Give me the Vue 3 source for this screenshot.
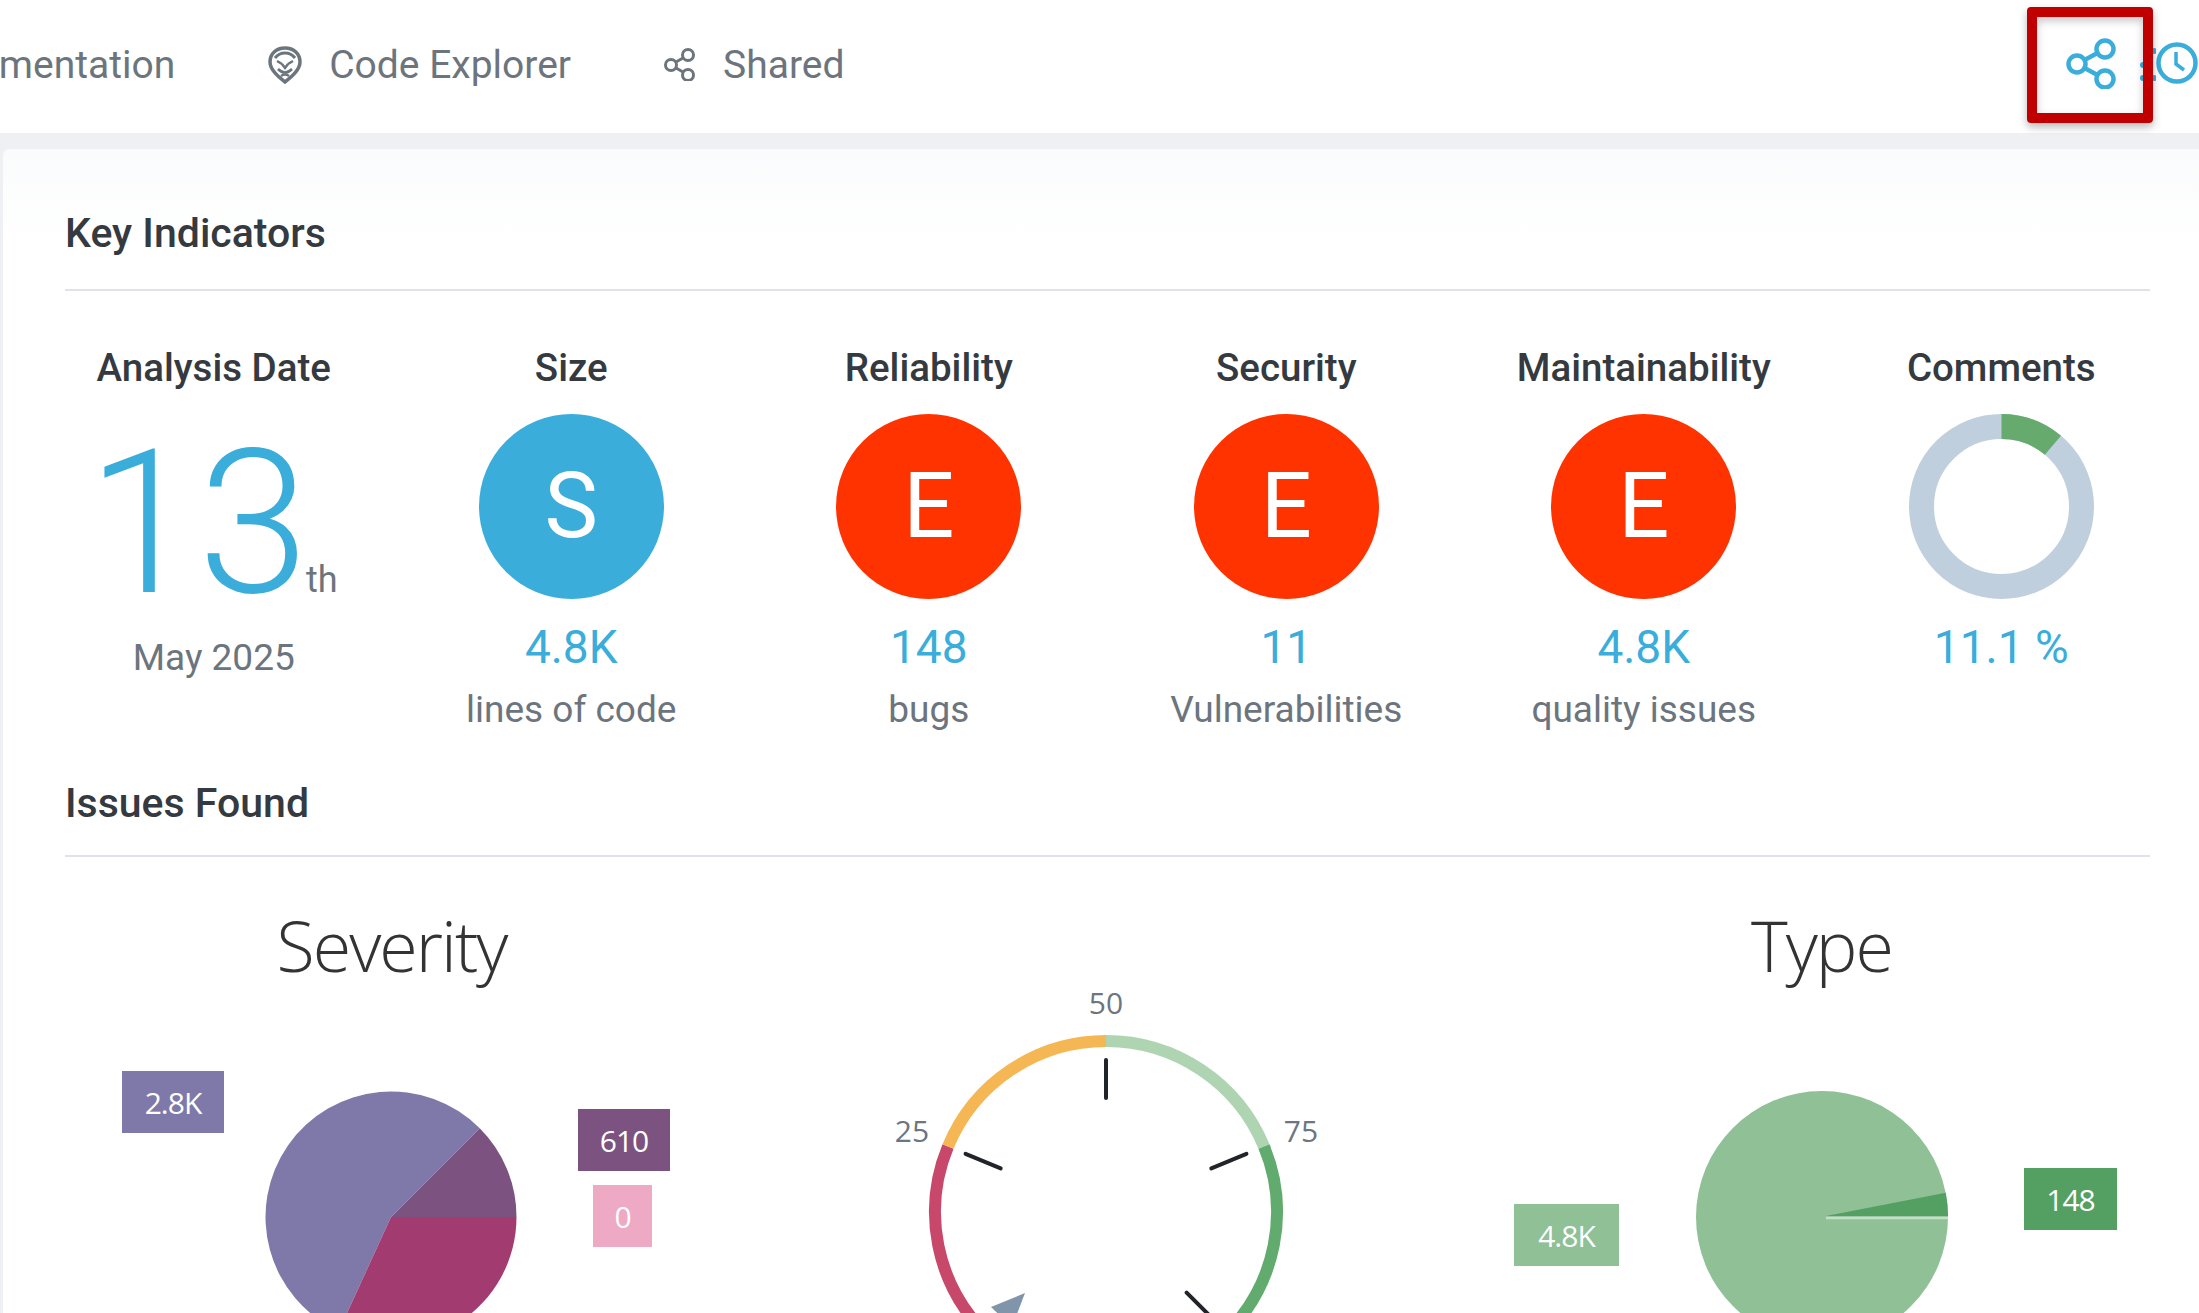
<template>
  <div class="page">
    <header class="topbar">
      <nav class="nav">
        <a class="nav-item">Documentation</a>
        <a class="nav-item">
          <svg class="lion" viewBox="0 0 34 38" fill="none" stroke="#6c757d" stroke-width="3.5">
            <path d="M17 2C8 2 2 8 2 16c0 8 9 15 15 20 6-5 15-12 15-20C32 8 26 2 17 2z" />
            <path d="M7 12c3-4 7-5 10-5s7 1 10 5" stroke-width="3" />
            <path d="M9 15l5 3M25 15l-5 3M14 18l3 4 3-4" stroke-width="2.5" />
            <path d="M10 23q7 7 14 0" stroke-width="2.5" />
            <path d="M13 30q4-3 8 0" stroke-width="2.5" />
          </svg>
          Code Explorer
        </a>
        <a class="nav-item">
          <svg class="share-sm" viewBox="0 0 32 33" fill="none" stroke="#6c757d" stroke-width="3">
            <circle cx="7" cy="17" r="5.5" />
            <circle cx="24" cy="7" r="5.5" />
            <circle cx="24" cy="27" r="5.5" />
            <path d="M12 14l7-4M12 20l7 4" />
          </svg>
          Shared
        </a>
      </nav>
      <div class="actions">
        <svg class="share-lg" viewBox="0 0 50 51" fill="none" stroke="#3aaddb" stroke-width="4.5">
          <circle cx="11" cy="26" r="8.5" />
          <circle cx="39" cy="11" r="8.5" />
          <circle cx="39" cy="41" r="8.5" />
          <path d="M18.5 22l13-7M18.5 30l13 7" />
        </svg>
        <svg class="peek" viewBox="0 0 16 36" fill="#3aaddb">
          <circle cx="3" cy="20" r="3" />
          <circle cx="3" cy="33" r="3" />
          <circle cx="14" cy="6" r="3" />
          <circle cx="14" cy="33" r="3" />
        </svg>
        <svg class="clock" viewBox="0 0 42 42" fill="none" stroke="#3aaddb" stroke-width="4.5">
          <circle cx="21" cy="21" r="18.5" />
          <path d="M20 10v12l8 6" stroke-width="3.5" />
        </svg>
      </div>
      <div class="highlight"></div>
    </header>

    <main class="card">
      <h2 class="section-title">Key Indicators</h2>
      <div class="indicators">
        <div class="indicator">
          <div class="ind-label">Analysis Date</div>
          <div class="date-num">13<span class="date-suffix">th</span></div>
          <div class="date-month">May 2025</div>
        </div>
        <div v-for="item in indicators" :key="item.label" class="indicator">
          <div class="ind-label">{{ item.label }}</div>
          <div class="grade" :class="item.grade === 'S' ? 'grade-blue' : 'grade-red'">{{ item.grade }}</div>
          <div class="ind-value">{{ item.value }}</div>
          <div class="ind-sub">{{ item.sub }}</div>
        </div>
        <div class="indicator">
          <div class="ind-label">Comments</div>
          <svg class="donut" viewBox="0 0 185 185" fill="none" stroke-width="25">
            <circle cx="92.5" cy="92.5" r="80" stroke="#bfcfdd" />
            <path :d="arc(92.5, 92.5, 80, -90, -50)" stroke="#66aa6e" />
          </svg>
          <div class="ind-value">11.1 %</div>
        </div>
      </div>

      <h2 class="section-title issues-title">Issues Found</h2>
      <div class="charts">
        <section class="chart">
          <h3 class="chart-title">Severity</h3>
          <svg class="chart-svg" viewBox="0 0 715 340">
            <path :d="slice(356, 227, 125.5, 114.6, 315)" fill="#7f79a9" />
            <path :d="slice(356, 227, 125.5, -45, 0)" fill="#7c5280" />
            <path :d="slice(356, 227, 125.5, 0, 114.6)" fill="#a23b70" />
            <g v-for="l in severityLabels" :key="l.text">
              <rect :x="l.x" :y="l.y" :width="l.w" height="62" :fill="l.fill" />
              <text class="pie-label" :x="l.x + l.w / 2" :y="l.y + 43">{{ l.text }}</text>
            </g>
          </svg>
        </section>

        <section class="chart gauge">
          <svg class="chart-svg" viewBox="0 0 715 340">
            <g fill="none" stroke-width="12">
              <path :d="arc(356, 222, 171, -225, -157.5)" stroke="#c7486b" />
              <path :d="arc(356, 222, 171, -157.5, -90)" stroke="#f5b754" />
              <path :d="arc(356, 222, 171, -90, -22.5)" stroke="#aed4b2" />
              <path :d="arc(356, 222, 171, -22.5, 45)" stroke="#62ab6f" />
            </g>
            <line
              v-for="a in tickAngles"
              :key="a"
              class="tick"
              :x1="pt(356, 222, 114, a).x"
              :y1="pt(356, 222, 114, a).y"
              :x2="pt(356, 222, 152, a).x"
              :y2="pt(356, 222, 152, a).y"
            />
            <polygon points="275,303 241,317 262,337" fill="#8094aa" />
            <text class="gauge-label" x="356" y="24">50</text>
            <text class="gauge-label" x="162" y="152">25</text>
            <text class="gauge-label" x="551" y="152">75</text>
          </svg>
        </section>

        <section class="chart">
          <h3 class="chart-title">Type</h3>
          <svg class="chart-svg" viewBox="0 0 715 340">
            <circle cx="357" cy="227" r="126" fill="#8fc096" />
            <path :d="slice(361, 226, 122, -11, 0)" fill="#549f62" />
            <line x1="361" y1="228" x2="483" y2="228" stroke="#c4dfc8" stroke-width="2.5" />
            <g v-for="l in typeLabels" :key="l.text">
              <rect :x="l.x" :y="l.y" :width="l.w" height="62" :fill="l.fill" />
              <text class="pie-label" :x="l.x + l.w / 2" :y="l.y + 43">{{ l.text }}</text>
            </g>
          </svg>
        </section>
      </div>
    </main>
  </div>
</template>

<script setup>
const indicators = [
  { label: 'Size', grade: 'S', value: '4.8K', sub: 'lines of code' },
  { label: 'Reliability', grade: 'E', value: '148', sub: 'bugs' },
  { label: 'Security', grade: 'E', value: '11', sub: 'Vulnerabilities' },
  { label: 'Maintainability', grade: 'E', value: '4.8K', sub: 'quality issues' },
]

const severityLabels = [
  { text: '2.8K', x: 87, y: 81, w: 102, fill: '#7f79a9' },
  { text: '610', x: 543, y: 119, w: 92, fill: '#7c5280' },
  { text: '0', x: 558, y: 195, w: 59, fill: '#eeaac4' },
]

const typeLabels = [
  { text: '4.8K', x: 49, y: 214, w: 105, fill: '#8fc096' },
  { text: '148', x: 559, y: 178, w: 93, fill: '#549f62' },
]

// angles of the gauge ticks, 0 = 3 o'clock, clockwise
const tickAngles = [-157.5, -90, -22.5, 45]

const pt = (cx, cy, r, deg) => {
  const a = (deg * Math.PI) / 180
  return { x: cx + r * Math.cos(a), y: cy + r * Math.sin(a) }
}

const arc = (cx, cy, r, from, to) => {
  const s = pt(cx, cy, r, from)
  const e = pt(cx, cy, r, to)
  const large = to - from > 180 ? 1 : 0
  return `M${s.x} ${s.y}A${r} ${r} 0 ${large} 1 ${e.x} ${e.y}`
}

const slice = (cx, cy, r, from, to) => `M${cx} ${cy}L${arc(cx, cy, r, from, to).slice(1)}Z`
</script>

<style>
html,
body {
  margin: 0;
  overflow: hidden;
  background: #eef0f3;
}
</style>

<style scoped>
.page {
  height: 100vh;
  overflow: hidden;
  font-family: Roboto, 'Liberation Sans', sans-serif;
}

/* top bar */
.topbar {
  position: relative;
  display: flex;
  align-items: center;
  height: 133px;
  background: #fff;
}
.nav {
  display: flex;
  align-items: center;
  gap: 93px;
  margin-left: -91px;
  padding-bottom: 4px;
}
.nav-item {
  display: flex;
  align-items: center;
  gap: 27px;
  font-size: 39px;
  line-height: 48px;
  color: #6c757d;
  white-space: nowrap;
}
.lion {
  width: 34px;
  height: 38px;
}
.share-sm {
  width: 32px;
  height: 33px;
}
.actions {
  display: flex;
  align-items: center;
  margin-left: auto;
  padding-right: 1px;
  padding-bottom: 7px;
}
.share-lg {
  width: 50px;
  height: 51px;
  margin-right: 24px;
}
.peek {
  width: 16px;
  height: 36px;
}
.clock {
  width: 42px;
  height: 42px;
}
/* red box around the share button */
.highlight {
  position: absolute;
  top: 7px;
  right: 46px;
  width: 126px;
  height: 116px;
  box-sizing: border-box;
  border: 10px solid #c00000;
  border-radius: 4px;
  box-shadow: 0 4px 8px rgba(0, 0, 0, 0.28), inset 0 4px 8px rgba(0, 0, 0, 0.22);
}

/* card */
.card {
  margin: 16px 0 0 3px;
  padding: 60px 49px 0 62px;
  border-top-left-radius: 6px;
  background: linear-gradient(#fafbfc, #fff 90px);
}
.section-title {
  margin: 0;
  padding-bottom: 32px;
  border-bottom: 2px solid #dfe2e6;
  font-size: 41px;
  line-height: 48px;
  font-weight: 500;
  color: #343a40;
}
.issues-title {
  margin-top: 47px;
  padding-bottom: 28px;
}

/* key indicators */
.indicators {
  display: grid;
  grid-template-columns: repeat(6, 1fr);
  margin: 54px -30px 0;
}
.indicator {
  display: flex;
  flex-direction: column;
  align-items: center;
}
.ind-label {
  margin-bottom: 23px;
  font-size: 38.5px;
  line-height: 46px;
  font-weight: 500;
  color: #343a40;
}
.date-num {
  display: flex;
  align-items: baseline;
  font-size: 200px;
  line-height: 220px;
  font-weight: 300;
  color: #3aaddb;
}
.date-suffix {
  margin: 0 3px 0 -3px;
  font-size: 36px;
  font-weight: 400;
  line-height: 44px;
  color: #6c757d;
}
.date-month {
  margin-top: 2px;
  font-size: 37px;
  line-height: 44px;
  color: #6c757d;
}
.grade {
  width: 185px;
  height: 185px;
  border-radius: 50%;
  color: #fff;
  font-size: 90px;
  line-height: 185px;
  text-align: center;
}
.grade-blue {
  background: #3aaddb;
}
.grade-red {
  background: #ff3300;
}
.donut {
  width: 185px;
  height: 185px;
}
.ind-value {
  margin-top: 20px;
  font-size: 46px;
  line-height: 56px;
  color: #3aaddb;
}
.ind-sub {
  margin-top: 13px;
  font-size: 37px;
  line-height: 44px;
  color: #6c757d;
}

/* charts */
.charts {
  display: grid;
  grid-template-columns: repeat(3, 1fr);
  margin: 0 -30px;
}
.chart-title {
  margin: 43px 2px 0 0;
  font-family: 'Open Sans', sans-serif;
  font-size: 70px;
  line-height: 90px;
  letter-spacing: -2px;
  font-weight: 300;
  color: #333;
  text-align: center;
}
.gauge {
  padding-top: 133px;
}
.chart-svg {
  display: block;
  width: 715px;
  height: 340px;
}
.pie-label {
  font-family: 'Open Sans', sans-serif;
  font-size: 30px;
  letter-spacing: -1px;
  fill: #fff;
  text-anchor: middle;
}
.gauge-label {
  font-family: 'Open Sans', sans-serif;
  font-size: 30px;
  fill: #6c7580;
  text-anchor: middle;
}
.tick {
  stroke: #212529;
  stroke-width: 4;
  stroke-linecap: round;
}
</style>
